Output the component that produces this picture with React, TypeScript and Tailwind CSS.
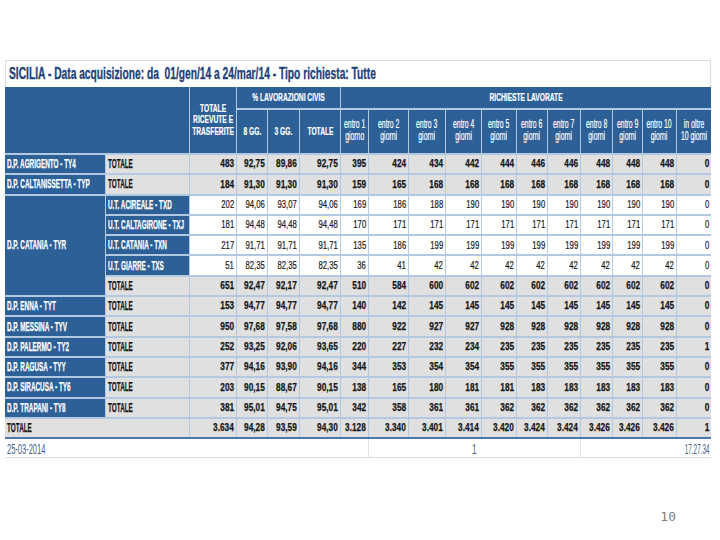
import React from 'react';

type V =
  | 'title'
  | 'label'
  | 'labelDark'
  | 'num'
  | 'numReg'
  | 'hdr'
  | 'hdrReg'
  | 'footL'
  | 'footC'
  | 'footR';

const vcls: Record<V, string> = {
  title: 'text-[16px] font-bold text-[#223f78] scale-x-[0.64] origin-left [-webkit-text-stroke:0.3px_#223f78]',
  label: 'text-[12px] font-bold text-white scale-x-[0.53] origin-left [-webkit-text-stroke:0.25px_#ffffff]',
  labelDark: 'text-[12px] font-bold text-[#151515] scale-x-[0.53] origin-left [-webkit-text-stroke:0.25px_#151515]',
  num: 'text-[11.5px] font-bold text-[#151515] scale-x-[0.72] origin-right [-webkit-text-stroke:0.25px_#151515]',
  numReg: 'text-[11.5px] text-[#151515] scale-x-[0.67] origin-right [-webkit-text-stroke:0.2px_#151515]',
  hdr: 'text-[11.5px] leading-[14px] font-bold text-white scale-x-[0.58] origin-center text-center [-webkit-text-stroke:0.2px_#ffffff]',
  hdrReg: 'text-[12px] leading-[15px] text-white scale-x-[0.57] origin-center text-center [-webkit-text-stroke:0.2px_#ffffff]',
  footL: 'text-[15px] text-[#3f5f8a] scale-x-[0.5] origin-left',
  footC: 'text-[15px] text-[#3f5f8a] scale-x-[0.55] origin-center',
  footR: 'text-[15px] text-[#3f5f8a] scale-x-[0.42] origin-right',
};

function T({ v, children }: { v: V; children: React.ReactNode }) {
  return <span className={'inline-block whitespace-pre leading-none ' + vcls[v]}>{children}</span>;
}

type Row = { label?: string; sub: string; ut: boolean; vals: (string | number)[]; span?: number };

const rows: Row[] = [
  { label: 'D.P. AGRIGENTO - TY4', sub: 'TOTALE', ut: false, vals: [483, '92,75', '89,86', '92,75', 395, 424, 434, 442, 444, 446, 446, 448, 448, 448, 0] },
  { label: 'D.P. CALTANISSETTA - TYP', sub: 'TOTALE', ut: false, vals: [184, '91,30', '91,30', '91,30', 159, 165, 168, 168, 168, 168, 168, 168, 168, 168, 0] },
  { label: 'D.P. CATANIA - TYR', span: 5, sub: 'U.T. ACIREALE - TXD', ut: true, vals: [202, '94,06', '93,07', '94,06', 169, 186, 188, 190, 190, 190, 190, 190, 190, 190, 0] },
  { sub: 'U.T. CALTAGIRONE - TXJ', ut: true, vals: [181, '94,48', '94,48', '94,48', 170, 171, 171, 171, 171, 171, 171, 171, 171, 171, 0] },
  { sub: 'U.T. CATANIA - TXN', ut: true, vals: [217, '91,71', '91,71', '91,71', 135, 186, 199, 199, 199, 199, 199, 199, 199, 199, 0] },
  { sub: 'U.T. GIARRE - TXS', ut: true, vals: [51, '82,35', '82,35', '82,35', 36, 41, 42, 42, 42, 42, 42, 42, 42, 42, 0] },
  { sub: 'TOTALE', ut: false, vals: [651, '92,47', '92,17', '92,47', 510, 584, 600, 602, 602, 602, 602, 602, 602, 602, 0] },
  { label: 'D.P. ENNA - TYT', sub: 'TOTALE', ut: false, vals: [153, '94,77', '94,77', '94,77', 140, 142, 145, 145, 145, 145, 145, 145, 145, 145, 0] },
  { label: 'D.P. MESSINA - TYV', sub: 'TOTALE', ut: false, vals: [950, '97,68', '97,58', '97,68', 880, 922, 927, 927, 928, 928, 928, 928, 928, 928, 0] },
  { label: 'D.P. PALERMO - TY2', sub: 'TOTALE', ut: false, vals: [252, '93,25', '92,06', '93,65', 220, 227, 232, 234, 235, 235, 235, 235, 235, 235, 1] },
  { label: 'D.P. RAGUSA - TYY', sub: 'TOTALE', ut: false, vals: [377, '94,16', '93,90', '94,16', 344, 353, 354, 354, 355, 355, 355, 355, 355, 355, 0] },
  { label: 'D.P. SIRACUSA - TY6', sub: 'TOTALE', ut: false, vals: [203, '90,15', '88,67', '90,15', 138, 165, 180, 181, 181, 183, 183, 183, 183, 183, 0] },
  { label: 'D.P. TRAPANI - TY8', sub: 'TOTALE', ut: false, vals: [381, '95,01', '94,75', '95,01', 342, 358, 361, 361, 362, 362, 362, 362, 362, 362, 0] },
];

const totals: (string | number)[] = ['3.634', '94,28', '93,59', '94,30', '3.128', '3.340', '3.401', '3.414', '3.420', '3.424', '3.424', '3.426', '3.426', '3.426', 1];

const entro = [
  'entro 1\ngiorno',
  'entro 2\ngiorni',
  'entro 3\ngiorni',
  'entro 4\ngiorni',
  'entro 5\ngiorni',
  'entro 6\ngiorni',
  'entro 7\ngiorni',
  'entro 8\ngiorni',
  'entro 9\ngiorni',
  'entro 10\ngiorni',
  'in oltre\n10 giorni',
];

const BLUE = 'bg-[#2e6098]';

export default function App() {
  return (
    <div className="w-[720px] h-[540px] bg-white overflow-hidden font-['Liberation_Sans',Arial,sans-serif]">
      <div className="pt-[60px] pl-[5px]">
        <div className="w-[706px]">
          <div className="h-[27px] border-t border-l border-r border-[#dcdcdc] flex items-center pl-[3px]">
            <T v="title">{'SICILIA - Data acquisizione: da  01/gen/14 a 24/mar/14 - Tipo richiesta: Tutte'}</T>
          </div>
          <div className="grid bg-[#b3c9e2] gap-x-px gap-y-[2px] grid-cols-[100px_83px_46px_30px_31px_40px_27px_39px_36px_35px_34px_30px_32px_31px_29px_33px_34px] grid-rows-[21px_43px_repeat(14,18.3px)]">
            <div className={BLUE + ' col-span-2 row-span-2'} />
            <div className={BLUE + ' row-span-2 flex items-center justify-center'}>
              <T v="hdr">{'TOTALE\nRICEVUTE E\nTRASFERITE'}</T>
            </div>
            <div className={BLUE + ' col-span-3 flex items-center justify-center'}>
              <T v="hdr">% LAVORAZIONI CIVIS</T>
            </div>
            <div className={BLUE + ' col-span-11 flex items-center justify-center'}>
              <T v="hdr">RICHIESTE LAVORATE</T>
            </div>
            <div className={BLUE + ' flex items-center justify-center'}>
              <T v="hdr">8 GG.</T>
            </div>
            <div className={BLUE + ' flex items-center justify-center'}>
              <T v="hdr">3 GG.</T>
            </div>
            <div className={BLUE + ' flex items-center justify-center'}>
              <T v="hdr">TOTALE</T>
            </div>
            {entro.map((e, i) => (
              <div key={i} className={BLUE + ' flex items-center justify-center pb-[3px]'}>
                <T v="hdrReg">{e}</T>
              </div>
            ))}

            {rows.map((r, ri) => (
              <React.Fragment key={ri}>
                {r.label && (
                  <div className={BLUE + ' flex items-center pl-[2px] ' + (r.span === 5 ? 'row-span-5' : '')}>
                    <T v="label">{r.label}</T>
                  </div>
                )}
                <div className={(r.ut ? BLUE : 'bg-[#e0e0e0]') + ' flex items-center pl-[2px]'}>
                  <T v={r.ut ? 'label' : 'labelDark'}>{r.sub}</T>
                </div>
                {r.vals.map((v, vi) => (
                  <div key={vi} className={(r.ut ? 'bg-white' : 'bg-[#e0e0e0]') + ' flex items-center justify-end pr-[2px]'}>
                    <T v={r.ut ? 'numReg' : 'num'}>{String(v)}</T>
                  </div>
                ))}
              </React.Fragment>
            ))}

            <div className="col-span-2 bg-[#e0e0e0] flex items-center pl-[2px]">
              <T v="labelDark">TOTALE</T>
            </div>
            {totals.map((v, vi) => (
              <div key={vi} className="bg-[#e0e0e0] flex items-center justify-end pr-[2px]">
                <T v="num">{String(v)}</T>
              </div>
            ))}
          </div>
          <div className="h-[2px] bg-[#4a79ae]" />
          <div className="flex h-[19px] border-b border-[#d9dee5]">
            <div className="w-[364px] flex items-center pl-[2px] border-r border-[#dde2e8]">
              <T v="footL">25-03-2014</T>
            </div>
            <div className="w-[212px] flex items-center justify-center border-r border-[#dde2e8]">
              <T v="footC">1</T>
            </div>
            <div className="flex-1 flex items-center justify-end pr-[2px]">
              <T v="footR">17.27.34</T>
            </div>
          </div>
        </div>
      </div>
      <div className="flex justify-end pr-[44px] pt-[52px]">
        <span className="text-[13px] text-[#7f7f7f] font-['DejaVu_Sans_Mono',monospace] leading-none">10</span>
      </div>
    </div>
  );
}
